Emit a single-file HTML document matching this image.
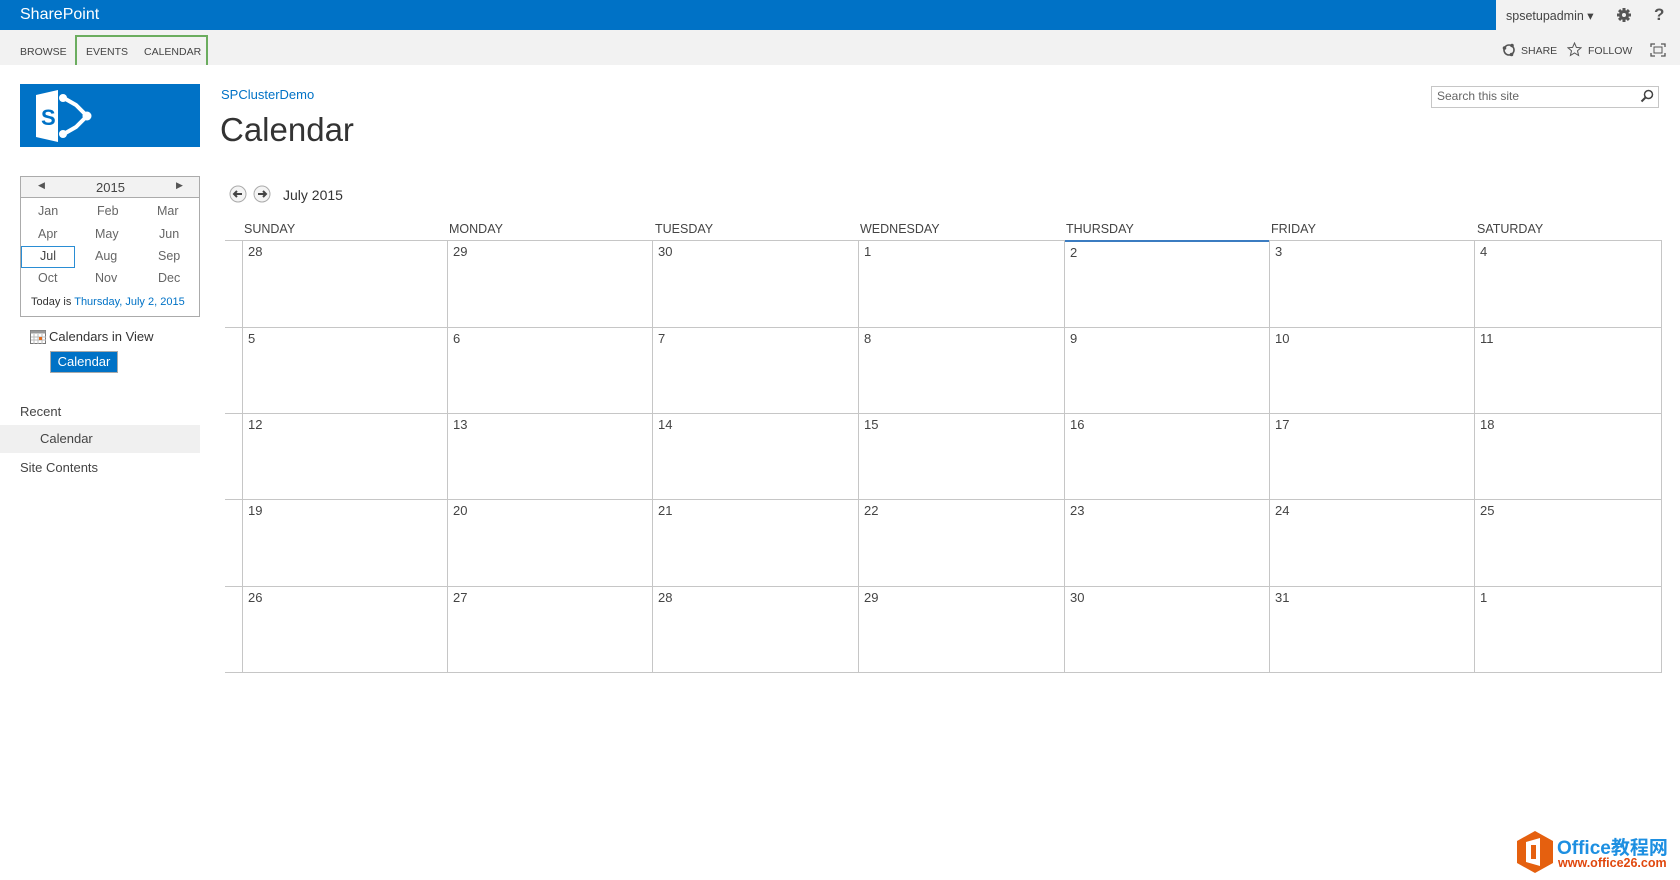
<!DOCTYPE html>
<html><head><meta charset="utf-8"><style>
*{margin:0;padding:0;box-sizing:border-box}
body{width:1680px;height:880px;overflow:hidden;background:#fff;font-family:"Liberation Sans",sans-serif;color:#444;position:relative;font-size:13px}
.a{position:absolute;white-space:nowrap}
.blue{color:#0072c6}
.hl{position:absolute;height:1px;background:#c6c6c6}
.vl{position:absolute;width:1px;background:#c6c6c6}
.dn{position:absolute;font-size:13px;color:#444}
.dh{position:absolute;top:222px;font-size:12.5px;color:#444}
</style></head><body>
<div class="a" style="left:0;top:0;width:1496px;height:30px;background:#0072c6"></div>
<div class="a" style="left:1496px;top:0;width:184px;height:30px;background:#f2f2f2"></div>
<div class="a" style="left:20px;top:6px;font-size:16px;color:#fff">SharePoint</div>
<div class="a" style="left:1506px;top:8px;font-size:12.5px;color:#444">spsetupadmin ▾</div>
<svg class="a" style="left:1616px;top:7px" width="16" height="16" viewBox="0 0 16 16"><g fill="#555"><circle cx="8" cy="8" r="5"/><rect x="6.5" y="1" width="3" height="14"/><rect x="1" y="6.5" width="14" height="3"/><rect x="6.5" y="1" width="3" height="14" transform="rotate(45 8 8)"/><rect x="6.5" y="1" width="3" height="14" transform="rotate(-45 8 8)"/></g><circle cx="8" cy="8" r="2" fill="#f2f2f2"/></svg>
<div class="a" style="left:1654px;top:5px;font-size:17px;font-weight:bold;color:#555">?</div>
<div class="a" style="left:0;top:30px;width:1680px;height:35px;background:#f2f2f2"></div>
<div class="a" style="left:75px;top:35px;width:133px;height:30px;border:2px solid #6bad5f;border-bottom:none;background:#f2f2f2"></div>
<div class="a" style="left:20px;top:46px;font-size:10.5px;color:#444">BROWSE</div>
<div class="a" style="left:86px;top:46px;font-size:10.5px;color:#444">EVENTS</div>
<div class="a" style="left:144px;top:46px;font-size:10.5px;color:#444">CALENDAR</div>
<svg class="a" style="left:1502px;top:43px" width="14" height="14" viewBox="0 0 14 14"><circle cx="7" cy="7" r="5" fill="none" stroke="#555" stroke-width="1.6"/><circle cx="2.5" cy="5" r="1.8" fill="#555"/><circle cx="10" cy="2.5" r="1.8" fill="#555"/><circle cx="9.5" cy="11.5" r="1.8" fill="#555"/></svg>
<div class="a" style="left:1521px;top:45px;font-size:10.5px;color:#444">SHARE</div>
<svg class="a" style="left:1567px;top:42px" width="15" height="15" viewBox="0 0 15 15"><path d="M7.5 1 9.4 5.4 14 5.8 10.5 8.8 11.6 13.5 7.5 11 3.4 13.5 4.5 8.8 1 5.8 5.6 5.4Z" fill="none" stroke="#555"/></svg>
<div class="a" style="left:1588px;top:45px;font-size:10.5px;color:#444">FOLLOW</div>
<svg class="a" style="left:1650px;top:43px" width="16" height="14" viewBox="0 0 16 14"><path d="M1 4V1h4M11 1h4v3M15 10v3h-4M5 13H1v-3" fill="none" stroke="#555" stroke-width="1.3"/><rect x="4" y="4" width="8" height="6" fill="none" stroke="#555"/></svg>

<div class="a" style="left:20px;top:84px;width:180px;height:63px;background:#0072c6"></div>
<svg class="a" style="left:32px;top:89px" width="64" height="54" viewBox="0 0 64 54"><path d="M4 6 26 1V53L4 48Z" fill="#fff"/><text x="9" y="36" font-family="Liberation Sans" font-weight="bold" font-size="22" fill="#0072c6">S</text><path d="M30 8 44 16 55 27 44 38 30 46" fill="none" stroke="#fff" stroke-width="4"/><circle cx="31" cy="9" r="4" fill="#fff"/><circle cx="55" cy="27" r="4.5" fill="#fff"/><circle cx="31" cy="45" r="4" fill="#fff"/></svg>
<div class="a blue" style="left:221px;top:87px;font-size:13px">SPClusterDemo</div>
<div class="a" style="left:220px;top:111px;font-size:33px;color:#333">Calendar</div>
<div class="a" style="left:1431px;top:86px;width:228px;height:22px;border:1px solid #c6c6c6"></div>
<div class="a" style="left:1437px;top:89px;font-size:12px;color:#666">Search this site</div>
<svg class="a" style="left:1640px;top:89px" width="14" height="14" viewBox="0 0 14 14"><circle cx="8.5" cy="5.5" r="4" fill="none" stroke="#444" stroke-width="1.5"/><path d="M5.5 8.5 1.5 12.5" stroke="#444" stroke-width="2"/></svg>

<div class="a" style="left:20px;top:176px;width:180px;height:141px;border:1px solid #ababab"></div>
<div class="a" style="left:21px;top:177px;width:178px;height:21px;background:#f2f2f2;border-bottom:1px solid #ababab"></div>
<div class="a" style="left:38px;top:180px;font-size:9px;color:#555">◀</div>
<div class="a" style="left:176px;top:180px;font-size:9px;color:#555">▶</div>
<div class="a" style="left:96px;top:180px;font-size:13px">2015</div>
<div class="a" style="left:21px;top:246px;width:54px;height:22px;border:1px solid #2a8dd4"></div>
<div class="a" style="left:38px;top:204px;font-size:12.5px;color:#666">Jan</div><div class="a" style="left:97px;top:204px;font-size:12.5px;color:#666">Feb</div><div class="a" style="left:157px;top:204px;font-size:12.5px;color:#666">Mar</div>
<div class="a" style="left:38px;top:227px;font-size:12.5px;color:#666">Apr</div><div class="a" style="left:95px;top:227px;font-size:12.5px;color:#666">May</div><div class="a" style="left:159px;top:227px;font-size:12.5px;color:#666">Jun</div>
<div class="a" style="left:40px;top:249px;font-size:12.5px;color:#444">Jul</div><div class="a" style="left:95px;top:249px;font-size:12.5px;color:#666">Aug</div><div class="a" style="left:158px;top:249px;font-size:12.5px;color:#666">Sep</div>
<div class="a" style="left:38px;top:271px;font-size:12.5px;color:#666">Oct</div><div class="a" style="left:95px;top:271px;font-size:12.5px;color:#666">Nov</div><div class="a" style="left:158px;top:271px;font-size:12.5px;color:#666">Dec</div>
<div class="a" style="left:31px;top:296px;font-size:11px;color:#333">Today is <span class="blue">Thursday, July 2, 2015</span></div>
<svg class="a" style="left:30px;top:330px" width="16" height="14" viewBox="0 0 16 14"><rect x=".5" y=".5" width="15" height="13" fill="#fff" stroke="#777"/><rect x=".5" y=".5" width="15" height="3" fill="#999"/><path d="M4 4v10M8 4v10M12 4v10M1 7h15M1 10h15" stroke="#bbb"/><rect x="9" y="7" width="3" height="3" fill="#e06a1c"/></svg>
<div class="a" style="left:49px;top:329px;font-size:13px;color:#333">Calendars in View</div>
<div class="a" style="left:50px;top:351px;width:68px;height:22px;background:#0072c6;border:1px solid #aaa;color:#fff;font-size:13px;text-align:center;line-height:20px">Calendar</div>
<div class="a" style="left:20px;top:404px;font-size:13px;color:#444">Recent</div>
<div class="a" style="left:0;top:425px;width:200px;height:28px;background:#f0f0f0"></div>
<div class="a" style="left:40px;top:431px;font-size:13px;color:#444">Calendar</div>
<div class="a" style="left:20px;top:460px;font-size:13px;color:#444">Site Contents</div>

<svg class="a" style="left:229px;top:185px" width="18" height="18" viewBox="0 0 18 18"><circle cx="9" cy="9" r="8" fill="#f4f4f4" stroke="#aaa"/><path d="M5 9h8M8 6 5 9 8 12" fill="none" stroke="#444" stroke-width="2"/></svg>
<svg class="a" style="left:253px;top:185px" width="18" height="18" viewBox="0 0 18 18"><circle cx="9" cy="9" r="8" fill="#f4f4f4" stroke="#aaa"/><path d="M5 9h8M10 6l3 3-3 3" fill="none" stroke="#444" stroke-width="2"/></svg>
<div class="a" style="left:283px;top:187px;font-size:14px;color:#333">July 2015</div>

<div class="dh" style="left:244px">SUNDAY</div><div class="dh" style="left:449px">MONDAY</div><div class="dh" style="left:655px">TUESDAY</div><div class="dh" style="left:860px">WEDNESDAY</div><div class="dh" style="left:1066px">THURSDAY</div><div class="dh" style="left:1271px">FRIDAY</div><div class="dh" style="left:1477px">SATURDAY</div>

<div class="hl" style="left:225px;top:240px;width:1437px"></div>
<div class="hl" style="left:225px;top:327px;width:1437px"></div>
<div class="hl" style="left:225px;top:413px;width:1437px"></div>
<div class="hl" style="left:225px;top:499px;width:1437px"></div>
<div class="hl" style="left:225px;top:586px;width:1437px"></div>
<div class="hl" style="left:225px;top:672px;width:1437px"></div>
<div class="a" style="left:1065px;top:240px;width:204px;height:2px;background:#3b7cc1"></div>
<div class="vl" style="left:242px;top:240px;height:433px"></div>
<div class="vl" style="left:447px;top:240px;height:433px"></div>
<div class="vl" style="left:652px;top:240px;height:433px"></div>
<div class="vl" style="left:858px;top:240px;height:433px"></div>
<div class="vl" style="left:1064px;top:240px;height:433px"></div>
<div class="vl" style="left:1269px;top:240px;height:433px"></div>
<div class="vl" style="left:1474px;top:240px;height:433px"></div>
<div class="vl" style="left:1661px;top:240px;height:433px"></div>

<div class="dn" style="left:248px;top:244px">28</div><div class="dn" style="left:453px;top:244px">29</div><div class="dn" style="left:658px;top:244px">30</div><div class="dn" style="left:864px;top:244px">1</div><div class="dn blue" style="left:1070px;top:245px">2</div><div class="dn" style="left:1275px;top:244px">3</div><div class="dn" style="left:1480px;top:244px">4</div>
<div class="dn" style="left:248px;top:331px">5</div><div class="dn" style="left:453px;top:331px">6</div><div class="dn" style="left:658px;top:331px">7</div><div class="dn" style="left:864px;top:331px">8</div><div class="dn" style="left:1070px;top:331px">9</div><div class="dn" style="left:1275px;top:331px">10</div><div class="dn" style="left:1480px;top:331px">11</div>
<div class="dn" style="left:248px;top:417px">12</div><div class="dn" style="left:453px;top:417px">13</div><div class="dn" style="left:658px;top:417px">14</div><div class="dn" style="left:864px;top:417px">15</div><div class="dn" style="left:1070px;top:417px">16</div><div class="dn" style="left:1275px;top:417px">17</div><div class="dn" style="left:1480px;top:417px">18</div>
<div class="dn" style="left:248px;top:503px">19</div><div class="dn" style="left:453px;top:503px">20</div><div class="dn" style="left:658px;top:503px">21</div><div class="dn" style="left:864px;top:503px">22</div><div class="dn" style="left:1070px;top:503px">23</div><div class="dn" style="left:1275px;top:503px">24</div><div class="dn" style="left:1480px;top:503px">25</div>
<div class="dn" style="left:248px;top:590px">26</div><div class="dn" style="left:453px;top:590px">27</div><div class="dn" style="left:658px;top:590px">28</div><div class="dn" style="left:864px;top:590px">29</div><div class="dn" style="left:1070px;top:590px">30</div><div class="dn" style="left:1275px;top:590px">31</div><div class="dn" style="left:1480px;top:590px">1</div>

<svg class="a" style="left:1516px;top:830px" width="38" height="44" viewBox="0 0 38 44"><path d="M19 1 37 11V33L19 43 1 33V11Z" fill="#e5600f"/><path d="M10 12 24 8V36L10 32Z" fill="#fff"/><rect x="15" y="15" width="5" height="14" fill="#e5600f"/></svg>
<div class="a" style="left:1557px;top:833px;font-size:19px;font-weight:bold;color:#1d8fe1;font-family:'Liberation Sans','Noto Sans CJK SC',sans-serif">Office教程网</div>
<div class="a" style="left:1558px;top:856px;font-size:12.5px;font-weight:bold;color:#e0480e">www.office26.com</div>
</body></html>
